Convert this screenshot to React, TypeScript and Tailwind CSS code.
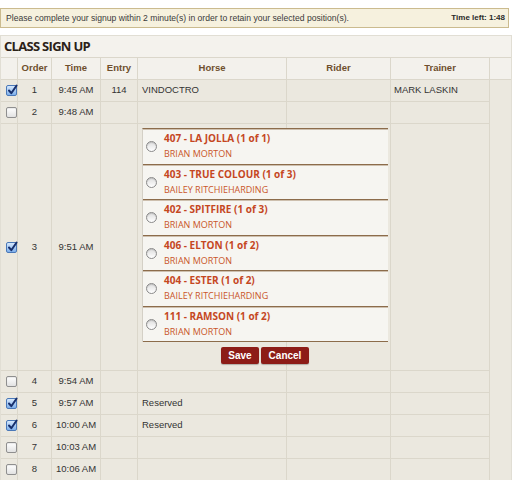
import React from "react";

type Row = {
  checked: boolean;
  order: string;
  time: string;
  entry?: string;
  horse?: string;
  rider?: string;
  trainer?: string;
  popup?: boolean;
};

const rows: Row[] = [
  { checked: true, order: "1", time: "9:45 AM", entry: "114", horse: "VINDOCTRO", trainer: "MARK LASKIN" },
  { checked: false, order: "2", time: "9:48 AM" },
  { checked: true, order: "3", time: "9:51 AM", popup: true },
  { checked: false, order: "4", time: "9:54 AM" },
  { checked: true, order: "5", time: "9:57 AM", horse: "Reserved" },
  { checked: true, order: "6", time: "10:00 AM", horse: "Reserved" },
  { checked: false, order: "7", time: "10:03 AM" },
  { checked: false, order: "8", time: "10:06 AM" },
];

const options = [
  { title: "407 - LA JOLLA (1 of 1)", rider: "BRIAN MORTON" },
  { title: "403 - TRUE COLOUR (1 of 3)", rider: "BAILEY RITCHIEHARDING" },
  { title: "402 - SPITFIRE (1 of 3)", rider: "BRIAN MORTON" },
  { title: "406 - ELTON (1 of 2)", rider: "BRIAN MORTON" },
  { title: "404 - ESTER (1 of 2)", rider: "BAILEY RITCHIEHARDING" },
  { title: "111 - RAMSON (1 of 2)", rider: "BRIAN MORTON" },
];

function Checkbox({ checked }: { checked: boolean }) {
  if (checked) {
    return (
      <div className="relative w-[11px] h-[11px] rounded-[2px] border border-[#4a78b8] bg-gradient-to-b from-[#d6e8fc] to-[#7eafeb]">
        <svg className="absolute left-[0px] top-[-2px]" width="11" height="12" viewBox="0 0 11 12">
          <path d="M2 6.5 L4.3 9.2 L9.6 1.5" fill="none" stroke="#172f6c" strokeWidth="2" strokeLinecap="round" strokeLinejoin="round" />
        </svg>
      </div>
    );
  }
  return (
    <div className="w-[11px] h-[11px] rounded-[2px] border border-[#8f8f8f] bg-gradient-to-b from-white to-[#e2e2e2] shadow-[inset_0_1px_1px_rgba(0,0,0,0.08)]" />
  );
}

function Radio() {
  return (
    <div className="w-[11px] h-[11px] shrink-0 rounded-full border border-[#8a8a8a] bg-gradient-to-b from-[#dedede] to-white shadow-[inset_0_1px_1px_rgba(0,0,0,0.15)]" />
  );
}

const cell = "border-r border-b border-[#dbd7cb] flex items-center";

export default function App() {
  return (
    <div className="w-[518px] h-[480px] overflow-hidden bg-white font-['Liberation_Sans',Arial,sans-serif]">
      <div className="mt-[8px] w-[509px] h-[20px] border border-[#cbbb8e] bg-[#f6f1de] flex items-center justify-between pl-[5px] pr-[3px] text-[#3a3a3a]">
        <span className="text-[8.6px]">Please complete your signup within 2 minute(s) in order to retain your selected position(s).</span>
        <span className="text-[8px] font-bold text-[#2a2a2a]">Time left: 1:48</span>
      </div>

      <div className="mt-[7px] w-[512px] border border-[#e1ded4] bg-[#f4f2ed]">
        <div className="h-[22px] border-b border-[#dbd7cb] flex items-center pl-[3px] font-['Open_Sans',sans-serif] font-bold text-[13px] tracking-[-0.7px] text-[#2b2118]">
          CLASS SIGN UP
        </div>
        <div className="flex">
          <div className="flex flex-col">
            <div className="grid grid-cols-[17px_34px_49px_37px_149px_104px_99px] h-[22px] bg-[#f3f1ec] text-[9.5px] font-bold text-[#6e4f2d]">
              <div className={cell} />
              <div className={cell + " justify-center"}>Order</div>
              <div className={cell + " justify-center"}>Time</div>
              <div className={cell + " justify-center"}>Entry</div>
              <div className={cell + " justify-center"}>Horse</div>
              <div className={cell + " justify-center"}>Rider</div>
              <div className={cell + " justify-center"}>Trainer</div>
            </div>
            {rows.map((r) => (
              <div
                key={r.order}
                className={
                  "grid grid-cols-[17px_34px_49px_37px_149px_104px_99px] bg-[#ebe8df] text-[9.5px] text-[#333] " +
                  (r.popup ? "" : "h-[22px]")
                }
              >
                <div className={cell + " pl-[5px]"}>
                  <Checkbox checked={r.checked} />
                </div>
                <div className={cell + " justify-center"}>{r.order}</div>
                <div className={cell + " justify-center"}>{r.time}</div>
                <div className={cell + " justify-center"}>{r.entry ?? ""}</div>
                {r.popup ? (
                  <div className="border-r border-b border-[#dbd7cb]">
                    <div className="relative z-10 ml-[4px] w-[246px] pt-[4px] pb-[6px]">
                      <div className="border-t border-[#8c6c4b] border-l border-l-[#d4d0c6] font-['Open_Sans',sans-serif] text-[#c5471f]">
                        {options.map((o) => (
                          <div
                            key={o.title}
                            className="h-[35.5px] flex items-center border-t border-[#cdbfae] border-b border-b-[#8c6c4b] bg-[#f6f5f1]"
                          >
                            <div className="ml-[3px]">
                              <Radio />
                            </div>
                            <div className="ml-[7px] flex flex-col leading-[15px] pb-[1px]">
                              <span className="font-bold text-[10px]">{o.title}</span>
                              <span className="text-[9px] text-[#c9552a]">{o.rider}</span>
                            </div>
                          </div>
                        ))}
                      </div>
                      <div className="mt-[5px] flex justify-center gap-[2px]">
                        <button className="w-[38px] h-[17px] rounded-[2px] bg-[#8d1c17] text-white font-bold text-[10px] shadow-[0_1px_1px_rgba(0,0,0,0.25)]">
                          Save
                        </button>
                        <button className="w-[48px] h-[17px] rounded-[2px] bg-[#8d1c17] text-white font-bold text-[10px] shadow-[0_1px_1px_rgba(0,0,0,0.25)]">
                          Cancel
                        </button>
                      </div>
                    </div>
                  </div>
                ) : (
                  <div className={cell + " pl-[4px]"}>{r.horse ?? ""}</div>
                )}
                <div className={cell + " pl-[3px]"}>{r.rider ?? ""}</div>
                <div className={cell + " pl-[3px]"}>{r.trainer ?? ""}</div>
              </div>
            ))}
            <div className="h-[22px] bg-[#ebe8df]" />
          </div>
          <div className="w-[21px] flex flex-col">
            <div className="h-[22px] border-b border-[#dbd7cb] bg-[#f3f1ec]" />
            <div className="flex-1 bg-[#ebe8df]" />
          </div>
        </div>
      </div>
    </div>
  );
}
